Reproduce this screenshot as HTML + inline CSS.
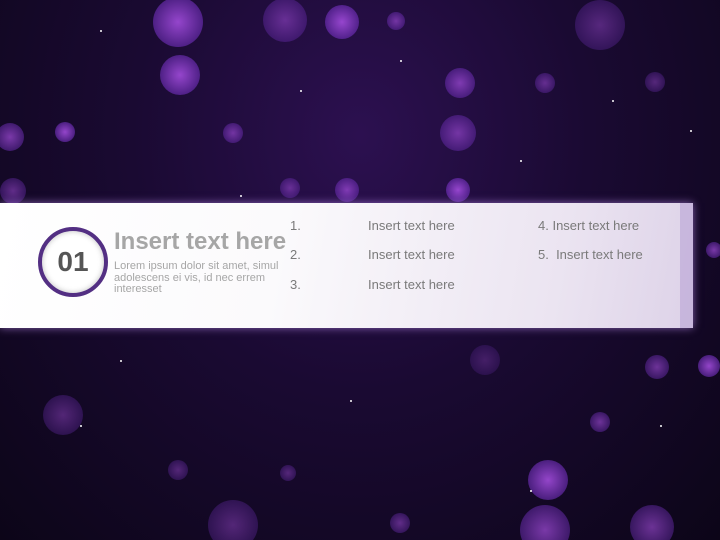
<!DOCTYPE html>
<html style="width:720px;height:540px;overflow:hidden"><head><style>
body{margin:0;width:720px;height:540px;overflow:hidden;background:#0d0619;font-family:"Liberation Sans",sans-serif;position:relative}
.bg{position:absolute;inset:0;background:radial-gradient(ellipse at 50% 25%,#2c1050 0%,#1a0a32 45%,#0c0518 100%)}
.b{position:absolute;border-radius:50%;background:radial-gradient(circle at 50% 50%,rgba(170,80,230,.85),rgba(120,50,200,.55) 70%,rgba(90,30,160,.2))}
.banner{position:absolute;left:0;top:203px;width:693px;height:125px;background:linear-gradient(100deg,#ffffff 0%,#fbfafc 40%,#ebe4f1 80%,#ddd2e8 100%);box-shadow:0 0 8px rgba(200,150,255,.6)}
.strip{position:absolute;left:680px;top:203px;width:13px;height:125px;background:rgba(190,170,215,.7)}
.circ{position:absolute;left:38px;top:227px;width:62px;height:62px;border:4px solid #532f83;border-radius:50%;background:#fff;box-shadow:inset 0 0 6px rgba(0,0,0,.25);text-align:center;line-height:62px;font-weight:bold;font-size:28px;color:#555}
.t{position:absolute;color:#7a7a7a;font-size:13px;white-space:nowrap}
.s{position:absolute;width:2px;height:2px;background:#fff;border-radius:50%}
</style></head><body>
<div class="bg"></div>
<div class="b" style="left:153px;top:-3px;width:50px;height:50px"></div>
<div class="b" style="left:263px;top:-2px;width:44px;height:44px;opacity:.6"></div>
<div class="b" style="left:325px;top:5px;width:34px;height:34px"></div>
<div class="b" style="left:160px;top:55px;width:40px;height:40px"></div>
<div class="b" style="left:-4px;top:123px;width:28px;height:28px;opacity:.8"></div>
<div class="b" style="left:55px;top:122px;width:20px;height:20px"></div>
<div class="b" style="left:223px;top:123px;width:20px;height:20px;opacity:.7"></div>
<div class="b" style="left:445px;top:68px;width:30px;height:30px;opacity:.8"></div>
<div class="b" style="left:440px;top:115px;width:36px;height:36px;opacity:.7"></div>
<div class="b" style="left:535px;top:73px;width:20px;height:20px;opacity:.6"></div>
<div class="b" style="left:575px;top:0px;width:50px;height:50px;opacity:.5"></div>
<div class="b" style="left:645px;top:72px;width:20px;height:20px;opacity:.5"></div>
<div class="b" style="left:335px;top:178px;width:24px;height:24px;opacity:.8"></div>
<div class="b" style="left:446px;top:178px;width:24px;height:24px"></div>
<div class="b" style="left:280px;top:178px;width:20px;height:20px;opacity:.6"></div>
<div class="b" style="left:0px;top:178px;width:26px;height:26px;opacity:.6"></div>
<div class="b" style="left:387px;top:12px;width:18px;height:18px;opacity:.7"></div>
<div class="b" style="left:43px;top:395px;width:40px;height:40px;opacity:.5"></div>
<div class="b" style="left:528px;top:460px;width:40px;height:40px"></div>
<div class="b" style="left:520px;top:505px;width:50px;height:50px;opacity:.8"></div>
<div class="b" style="left:630px;top:505px;width:44px;height:44px;opacity:.7"></div>
<div class="b" style="left:590px;top:412px;width:20px;height:20px;opacity:.7"></div>
<div class="b" style="left:645px;top:355px;width:24px;height:24px;opacity:.7"></div>
<div class="b" style="left:698px;top:355px;width:22px;height:22px"></div>
<div class="b" style="left:208px;top:500px;width:50px;height:50px;opacity:.5"></div>
<div class="b" style="left:390px;top:513px;width:20px;height:20px;opacity:.6"></div>
<div class="b" style="left:168px;top:460px;width:20px;height:20px;opacity:.5"></div>
<div class="b" style="left:280px;top:465px;width:16px;height:16px;opacity:.5"></div>
<div class="b" style="left:706px;top:242px;width:16px;height:16px;opacity:.8"></div>
<div class="b" style="left:470px;top:345px;width:30px;height:30px;opacity:.35"></div>
<div class="s" style="left:240px;top:195px"></div><div class="s" style="left:520px;top:160px"></div><div class="s" style="left:612px;top:100px"></div><div class="s" style="left:400px;top:60px"></div><div class="s" style="left:100px;top:30px"></div><div class="s" style="left:80px;top:425px"></div><div class="s" style="left:530px;top:490px"></div><div class="s" style="left:660px;top:425px"></div><div class="s" style="left:350px;top:400px"></div><div class="s" style="left:120px;top:360px"></div><div class="s" style="left:690px;top:130px"></div><div class="s" style="left:300px;top:90px"></div>
<div class="banner"></div>
<div class="strip"></div>
<div class="circ">01</div>
<div class="t" style="left:114px;top:228px;font-size:24px;font-weight:bold;color:#a6a6a6">Insert text here</div>
<div class="t" style="left:114px;top:261px;font-size:11px;line-height:11.5px;color:#a6a6a6;white-space:normal;width:175px">Lorem ipsum dolor sit amet, simul adolescens ei vis, id nec errem interesset</div>
<div class="t" style="left:290px;top:218px">1.</div>
<div class="t" style="left:290px;top:247px">2.</div>
<div class="t" style="left:290px;top:277px">3.</div>
<div class="t" style="left:368px;top:218px">Insert text here</div>
<div class="t" style="left:368px;top:247px">Insert text here</div>
<div class="t" style="left:368px;top:277px">Insert text here</div>
<div class="t" style="left:538px;top:218px">4. Insert text here</div>
<div class="t" style="left:538px;top:247px">5.&nbsp; Insert text here</div>
</body></html>
